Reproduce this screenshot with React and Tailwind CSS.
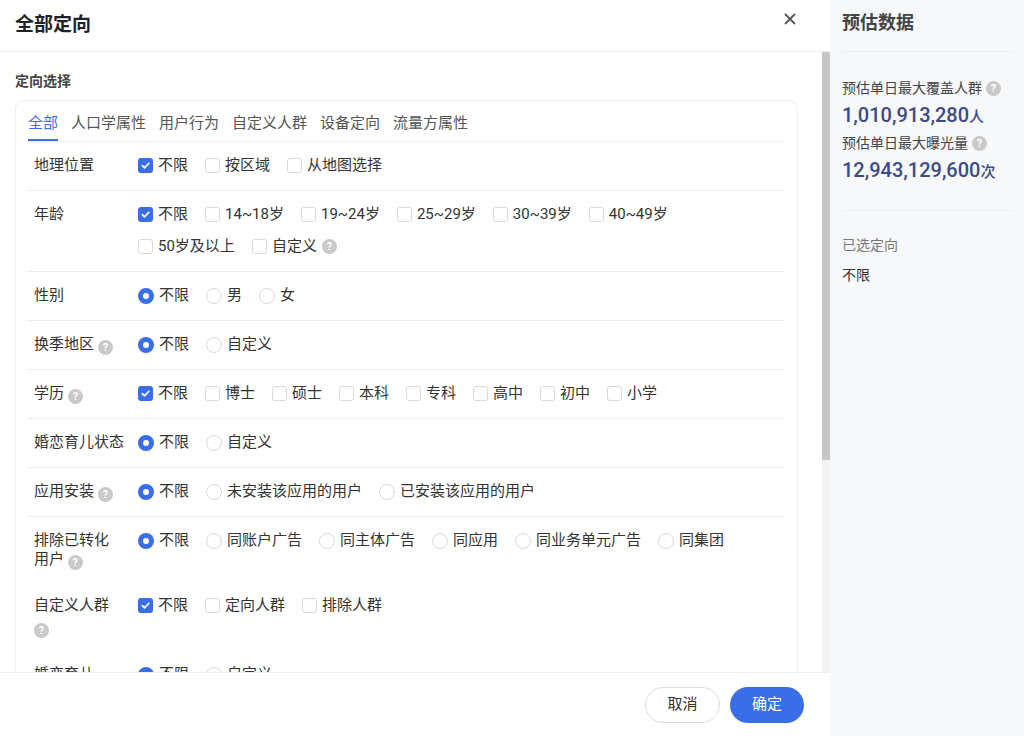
import React from "react";

const Q = ({ c = "" }) => (
  <span className={"inline-flex items-center justify-center w-[15px] h-[15px] rounded-full bg-[#c9c9c9] text-white text-[11px] font-bold leading-none " + c}>?</span>
);

const Box = ({ on }) =>
  on ? (
    <span className="w-[15px] h-[15px] rounded-[3px] bg-[#3a6ee8] flex items-center justify-center shrink-0">
      <svg width="11" height="11" viewBox="0 0 12 12"><path d="M2.5 6.2l2.4 2.4 4.8-5" stroke="#fff" strokeWidth="1.8" fill="none" strokeLinecap="round" strokeLinejoin="round" /></svg>
    </span>
  ) : (
    <span className="w-[15px] h-[15px] rounded-[3px] border border-[#d9d9d9] bg-white shrink-0" />
  );

const Radio = ({ on }) =>
  on ? (
    <span className="w-[16px] h-[16px] rounded-full bg-[#3a6ee8] flex items-center justify-center shrink-0"><span className="w-[6px] h-[6px] rounded-full bg-white" /></span>
  ) : (
    <span className="w-[16px] h-[16px] rounded-full border border-[#d9d9d9] bg-white shrink-0" />
  );

const Opt = ({ t, on, radio, q }) => (
  <span className="flex items-center gap-[5px] mr-[17px] h-6">
    {radio ? <Radio on={on} /> : <Box on={on} />}
    <span>{t}</span>
    {q && <Q />}
  </span>
);

const rows = [
  { l: "地理位置", o: ["不限", "按区域", "从地图选择"] },
  { l: "年龄", o: ["不限", "14~18岁", "19~24岁", "25~29岁", "30~39岁", "40~49岁", "50岁及以上", "自定义"], qLast: true },
  { l: "性别", r: true, o: ["不限", "男", "女"] },
  { l: "换季地区", q: true, r: true, o: ["不限", "自定义"] },
  { l: "学历", q: true, o: ["不限", "博士", "硕士", "本科", "专科", "高中", "初中", "小学"] },
  { l: "婚恋育儿状态", r: true, o: ["不限", "自定义"] },
  { l: "应用安装", q: true, r: true, o: ["不限", "未安装该应用的用户", "已安装该应用的用户"] },
  { l: <>排除已转化<br />用户 <Q c="align-[-2px]" /></>, r: true, o: ["不限", "同账户广告", "同主体广告", "同应用", "同业务单元广告", "同集团"], nb: true },
  { l: <>自定义人群<br /><Q c="mt-2" /></>, o: ["不限", "定向人群", "排除人群"], nb: true },
  { l: "婚恋育儿", r: true, o: ["不限", "自定义"], nb: true },
];

export default function App() {
  return (
    <div className="w-[1024px] h-[736px] flex bg-white text-[15px] text-[#333] overflow-hidden" style={{ fontFamily: 'Roboto, "Noto Sans CJK SC", sans-serif' }}>
      <div className="w-[830px] flex flex-col">
        <div className="h-[52px] shrink-0 flex items-center justify-between px-[15px] border-b border-[#eee]">
          <span className="text-[19px] font-bold text-[#222]">全部定向</span>
          <svg width="14" height="14" viewBox="0 0 14 14" className="mr-[18px] mb-[14px]"><path d="M2 2l10 10M12 2L2 12" stroke="#555" strokeWidth="1.8" /></svg>
        </div>
        <div className="flex-1 flex overflow-hidden">
          <div className="flex-1 overflow-hidden pl-[15px] pr-[24px]">
            <div className="pt-[19px] pb-[8px] text-[14px] font-bold text-[#444]">定向选择</div>
            <div className="border border-[#eee] rounded-[8px] px-[12px] pb-4">
              <div className="flex gap-[13px] border-b border-[#eee] pt-[11px] text-[#555] text-[15px]">
                {["全部", "人口学属性", "用户行为", "自定义人群", "设备定向", "流量方属性"].map((t, i) => (
                  <span key={t} className={"pb-[4px] " + (i === 0 ? "text-[#3a6ee8] border-b-2 border-[#3a6ee8]" : "border-b-2 border-transparent")}>{t}</span>
                ))}
              </div>
              {rows.map((r, i) => (
                <div key={i} className={"flex py-3 " + (r.nb ? "" : "border-b border-[#eee]")}>
                  <div className="w-[110px] pl-[6px] shrink-0 leading-[19px] pt-[2px] text-[#333]">
                    {r.l}{r.q && <Q c="ml-1 align-[-2px]" />}
                  </div>
                  <div className="flex flex-wrap gap-y-2 flex-1">
                    {r.o.map((t, j) => (
                      <Opt key={j} t={t} on={j === 0} radio={r.r} q={r.qLast && j === r.o.length - 1} />
                    ))}
                  </div>
                </div>
              ))}
            </div>
          </div>
          <div className="w-[8px] bg-[#f3f3f3]"><div className="h-[408px] bg-[#c6c6c6]" /></div>
        </div>
        <div className="h-[64px] shrink-0 flex items-center justify-end gap-[10px] pr-[26px] border-t border-[#f0f0f0] bg-white">
          <button className="w-[75px] h-[36px] rounded-full border border-[#ddd] text-[#333]">取消</button>
          <button className="w-[74px] h-[36px] rounded-full bg-[#3a6ee8] text-white">确定</button>
        </div>
      </div>
      <div className="flex-1 bg-[#f7f8fa] px-[12px]">
        <div className="h-[52px] flex items-center border-b border-[#eceef2] text-[18px] font-bold text-[#444] pb-[6px]">预估数据</div>
        <div className="pt-[26px] pb-[22px] border-b border-[#eceef2] text-[14px]">
          <div className="flex items-center gap-1 text-[#444]">预估单日最大覆盖人群 <Q /></div>
          <div className="whitespace-nowrap text-[20px] font-medium text-[#3d4a86] leading-[32px]">1,010,913,280<span className="text-[15px]">人</span></div>
          <div className="flex items-center gap-1 text-[#444]">预估单日最大曝光量 <Q /></div>
          <div className="whitespace-nowrap text-[20px] font-medium text-[#3d4a86] leading-[32px]">12,943,129,600<span className="text-[15px]">次</span></div>
        </div>
        <div className="pt-[24px] text-[#777] text-[14px]">已选定向</div>
        <div className="pt-[9px] text-[#333] text-[14px]">不限</div>
      </div>
    </div>
  );
}
